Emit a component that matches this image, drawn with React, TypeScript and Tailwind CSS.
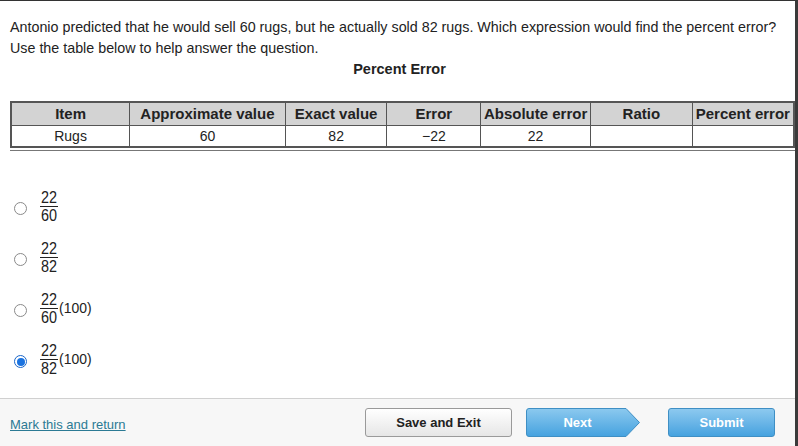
import React from "react";

const cols = [
  { label: "Item", w: "w-[119px]", val: "Rugs" },
  { label: "Approximate value", w: "w-[156px]", val: "60" },
  { label: "Exact value", w: "w-[102px]", val: "82" },
  { label: "Error", w: "w-[94px]", val: "\u221222" },
  { label: "Absolute error", w: "w-[110px]", val: "22" },
  { label: "Ratio", w: "w-[102px]", val: "" },
  { label: "Percent error", w: "w-[102px]", val: "" },
];

const options = [
  { num: "22", den: "60", tail: "" },
  { num: "22", den: "82", tail: "" },
  { num: "22", den: "60", tail: "(100)" },
  { num: "22", den: "82", tail: "(100)" },
];

const Fraction = ({ num, den }: { num: string; den: string }) => (
  <span className="inline-flex flex-col items-center text-[16px] leading-[16px] [transform:scaleX(0.9)] origin-left">
    <span className="px-[1px]">{num}</span>
    <span className="border-t border-[#222] px-[1px] pt-[1px]">{den}</span>
  </span>
);

const App = () => {
  return (
    <div className="w-[798px] h-[446px] bg-white border-t border-[#333] border-r-[3px] border-r-[#3a3a3a] flex flex-col overflow-hidden text-[#222] font-['Liberation_Sans',Arial,sans-serif]">
      {/* question */}
      <div className="flex-grow min-h-0 overflow-hidden">
        <div className="pl-[10px] pt-[16px] text-[14.3px] leading-[21px]">
          <p>
            Antonio predicted that he would sell 60 rugs, but he actually sold
            82 rugs. Which expression would find the percent error?
          </p>
          <p>Use the table below to help answer the question.</p>
          <p className="text-center font-bold pr-[6px] text-[14.5px]">Percent Error</p>
        </div>

        <div className="ml-[10px] mt-[21px] w-fit border-b border-[#777] pb-[2px]">
          <table className="border-collapse border-2 border-[#555] text-[15px]">
            <thead>
              <tr className="bg-[#d3d3d3] h-[23px]">
                {cols.map((c) => (
                  <th
                    key={c.label}
                    className={`${c.w} border border-[#555] font-bold leading-[20px] p-0`}
                  >
                    {c.label}
                  </th>
                ))}
              </tr>
            </thead>
            <tbody>
              <tr className="h-[22px]">
                {cols.map((c) => (
                  <td
                    key={c.label}
                    className="border border-[#555] text-center leading-[20px] p-0 text-[14px]"
                  >
                    {c.val}
                  </td>
                ))}
              </tr>
            </tbody>
          </table>
        </div>

        {/* options */}
        <div className="mt-[32px] flex flex-col">
          {options.map((o, i) => (
            <label key={i} className="flex items-center h-[51px] pl-[14px]">
              {i === 3 ? (
                <span className="w-[13px] h-[13px] rounded-full border border-[#1a66c9] flex items-center justify-center">
                  <span className="w-[8px] h-[8px] rounded-full bg-[#1a73e0]" />
                </span>
              ) : (
                <span className="w-[13px] h-[13px] rounded-full border border-[#8a8a8a] bg-white" />
              )}
              <span className="ml-[13px] -mt-[4px] flex items-center">
                <Fraction num={o.num} den={o.den} />
                {o.tail && (
                  <span className="text-[15px] -ml-[1px] [transform:scaleX(0.93)] origin-left">
                    {o.tail}
                  </span>
                )}
              </span>
            </label>
          ))}
        </div>
      </div>

      {/* footer */}
      <div className="h-[48px] shrink-0 border-t border-[#d0d0d0] bg-[#f7f7f7] flex items-center pl-[10px] pr-[20px]">
        <a href="#" className="text-[13px] text-[#2b7a94] underline mt-[4px]">
          Mark this and return
        </a>
        <div className="ml-auto flex items-center">
          <button className="w-[147px] h-[29px] rounded-[3px] border border-[#9a9a9a] bg-gradient-to-b from-white to-[#e6e6e6] text-[13px] font-bold text-[#222]">
            Save and Exit
          </button>
          <button className="relative ml-[14px] w-[115px] h-[29px] flex items-center justify-center">
            <svg
              className="absolute inset-0"
              width="115"
              height="29"
              viewBox="0 0 115 29"
            >
              <defs>
                <linearGradient id="nextg" x1="0" y1="0" x2="0" y2="1">
                  <stop offset="0" stopColor="#8cc9ef" />
                  <stop offset="1" stopColor="#45a2df" />
                </linearGradient>
              </defs>
              <path
                d="M3 0.5 H100 L113.5 14.5 L100 28.5 H3 Q0.5 28.5 0.5 26 V3 Q0.5 0.5 3 0.5 Z"
                fill="url(#nextg)"
                stroke="#3f8fc4"
              />
            </svg>
            <span className="relative text-[13px] font-bold text-white pr-[12px]">
              Next
            </span>
          </button>
          <button className="ml-[27px] w-[107px] h-[29px] rounded-[3px] border border-[#3f8fc4] bg-gradient-to-b from-[#8cc9ef] to-[#45a2df] text-[13px] font-bold text-white">
            Submit
          </button>
        </div>
      </div>
    </div>
  );
};

export default App;
